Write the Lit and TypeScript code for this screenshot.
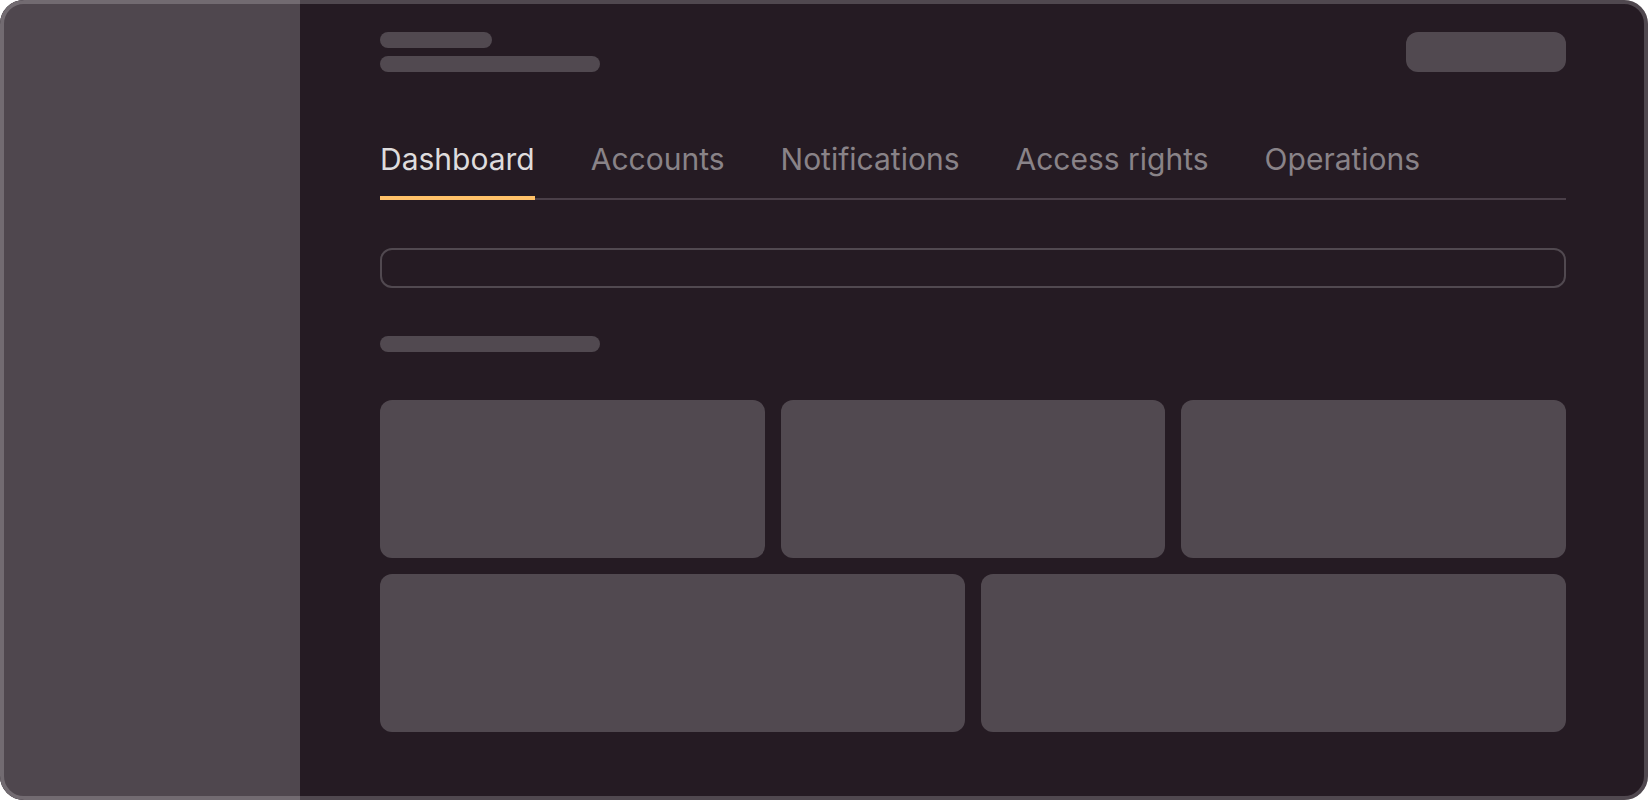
import { LitElement, html, css } from "lit";
import { customElement, state } from "lit/decorators.js";

const TABS = ["Dashboard", "Accounts", "Notifications", "Access rights", "Operations"];

@customElement("app-root")
export class AppRoot extends LitElement {
  static styles = css`
    :host {
      display: block;
      font-family: Inter, "Liberation Sans", sans-serif;
      --surface: #251b23;
      --side: #4f474e;
      --block: #514950;
      --line: #4a3f48;
      --accent: #ffc168;
    }
    * {
      box-sizing: border-box;
    }
    .frame {
      position: relative;
      display: flex;
      min-height: 100vh;
      border-radius: 24px;
      overflow: hidden;
      background: var(--surface);
    }
    /* translucent edge lies over both the sidebar and the content */
    .frame::after {
      content: "";
      position: absolute;
      inset: 0;
      border: 4px solid rgba(255, 255, 255, 0.2);
      border-radius: 24px;
      pointer-events: none;
    }
    .sidebar {
      flex: 0 0 300px;
      background: var(--side);
    }
    main {
      flex: 1;
      min-width: 0;
      display: flex;
      flex-direction: column;
      gap: 48px;
      padding: 32px 82px 68px 80px;
    }
    header {
      display: flex;
      justify-content: space-between;
      align-items: center;
    }
    .titles {
      display: flex;
      flex-direction: column;
      gap: 8px;
    }
    .bar {
      width: 220px;
      height: 16px;
      border-radius: 8px;
      background: var(--block);
    }
    .bar.short {
      width: 112px;
    }
    button {
      font: inherit;
      border: 0;
      margin: 0;
      padding: 0;
      cursor: pointer;
    }
    .action {
      width: 160px;
      height: 40px;
      border-radius: 12px;
      background: var(--block);
    }
    .tabs {
      display: flex;
      gap: 56px;
      padding-top: 20px;
      background: linear-gradient(var(--line), var(--line)) bottom / 100% 2px no-repeat;
    }
    .tab {
      padding-bottom: 18px;
      border-bottom: 4px solid transparent;
      background: none;
      color: #898388;
      font-size: 30px;
      font-weight: 400;
      line-height: 38px;
      white-space: nowrap;
    }
    .tab[aria-selected="true"] {
      color: #dedcdd;
      border-bottom-color: var(--accent);
    }
    .field {
      width: 100%;
      height: 40px;
      padding: 0 16px;
      border: 2px solid var(--block);
      border-radius: 12px;
      background: transparent;
      color: #dedcdd;
      font: inherit;
      font-size: 16px;
    }
    .cards {
      display: grid;
      grid-template-columns: repeat(6, 1fr);
      gap: 16px;
    }
    .card {
      grid-column: span 2;
      height: 158px;
      border-radius: 12px;
      background: var(--block);
    }
    .card.wide {
      grid-column: span 3;
    }
  `;

  @state() private active = 0;

  render() {
    return html`
      <div class="frame">
        <aside class="sidebar"></aside>
        <main>
          <header>
            <div class="titles">
              <div class="bar short"></div>
              <div class="bar"></div>
            </div>
            <button class="action" aria-label="Action"></button>
          </header>
          <div class="tabs" role="tablist">
            ${TABS.map(
              (label, i) => html`<button
                class="tab"
                role="tab"
                aria-selected=${i === this.active ? "true" : "false"}
                @click=${() => (this.active = i)}
              >${label}</button>`
            )}
          </div>
          <input class="field" type="text" aria-label="Search" />
          <div class="bar"></div>
          <section class="cards">
            <div class="card"></div>
            <div class="card"></div>
            <div class="card"></div>
            <div class="card wide"></div>
            <div class="card wide"></div>
          </section>
        </main>
      </div>
    `;
  }
}
